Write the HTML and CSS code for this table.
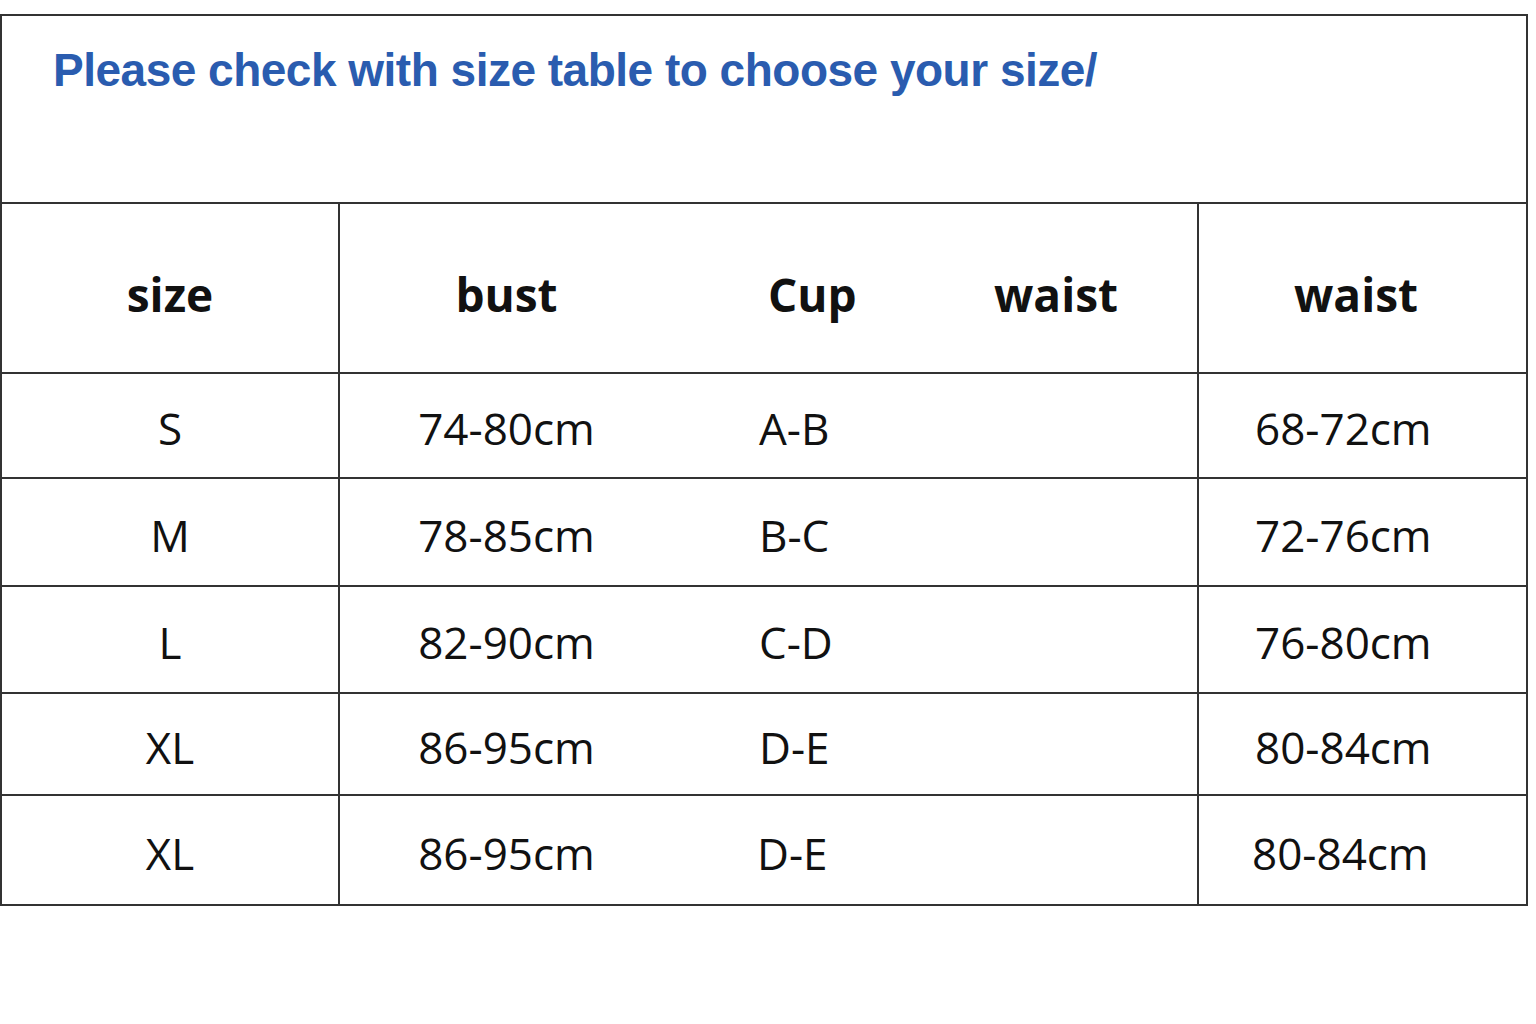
FILE: index.html
```html
<!DOCTYPE html>
<html lang="en">
<head>
<meta charset="utf-8">
<title>Size table</title>
<link rel="stylesheet" href="styles.css">
</head>
<body>
<div class="page">
  <table class="size-table">
    <colgroup>
      <col class="c-size">
      <col class="c-bust">
      <col class="c-cup">
      <col class="c-waist">
      <col class="c-waist2">
    </colgroup>
    <thead>
      <tr class="title-row">
        <th colspan="5" class="title">Please check with size table to choose your size/</th>
      </tr>
      <tr class="head-row">
        <th class="size b-right">size</th>
        <th class="bust">bust</th>
        <th class="cup">Cup</th>
        <th class="waist">waist</th>
        <th class="waist2 b-left">waist</th>
      </tr>
    </thead>
    <tbody>
      <tr class="r1"><td class="size b-right">S</td><td class="bust">74-80cm</td><td class="cup">A-B</td><td class="waist"></td><td class="waist2 b-left">68-72cm</td></tr>
      <tr class="r2"><td class="size b-right">M</td><td class="bust">78-85cm</td><td class="cup">B-C</td><td class="waist"></td><td class="waist2 b-left">72-76cm</td></tr>
      <tr class="r3"><td class="size b-right">L</td><td class="bust">82-90cm</td><td class="cup">C-D</td><td class="waist"></td><td class="waist2 b-left">76-80cm</td></tr>
      <tr class="r4"><td class="size b-right">XL</td><td class="bust">86-95cm</td><td class="cup">D-E</td><td class="waist"></td><td class="waist2 b-left">80-84cm</td></tr>
      <tr class="r5"><td class="size b-right">XL</td><td class="bust">86-95cm</td><td class="cup d-e">D-E</td><td class="waist"></td><td class="waist2 b-left last">80-84cm</td></tr>
    </tbody>
  </table>
</div>
</body>
</html>
```

FILE: styles.css
```css
html, body {
  margin: 0;
  padding: 0;
  background: #ffffff;
}

.page {
  padding-top: 14px;
}

.size-table {
  width: 1526px;
  table-layout: fixed;
  border-collapse: collapse;
  border: 2px solid #333333;
  font-family: "Open Sans", "Noto Sans", sans-serif;
  color: #111111;
}

.c-size { width: 338px; }
.c-bust { width: 334px; }
.c-cup { width: 268px; }
.c-waist { width: 257px; }
.c-waist2 { width: 329px; }

.size-table th,
.size-table td {
  padding: 0;
  border-top: 2px solid #333333;
  border-bottom: 2px solid #333333;
}

.size-table .b-right { border-right: 2px solid #333333; }
.size-table .b-left { border-left: 2px solid #333333; }

.size-table .title {
  height: 156px;
  vertical-align: top;
  text-align: left;
  padding: 30px 0 0 51px;
  font-family: "Liberation Sans", Arial, sans-serif;
  font-weight: 700;
  font-size: 46px;
  letter-spacing: -0.5px;
  line-height: 48px;
  color: #2a5caf;
}

.size-table .head-row th {
  height: 156px;
  font-size: 46px;
  font-weight: 700;
  line-height: 1;
  padding-top: 12px;
}

.size-table tbody td {
  font-size: 44px;
  font-weight: 400;
  line-height: 1;
  padding-top: 5px;
}

.size-table .r1 td { height: 98px; }
.size-table .r2 td { height: 101px; }
.size-table .r3 td { height: 100px; }
.size-table .r4 td { height: 95px; }
.size-table .r5 td { height: 103px; }

.size-table .size { text-align: center; }
.size-table .bust { text-align: center; }
.size-table .cup { text-align: left; padding-left: 86px; }
.size-table .head-row .cup { padding-left: 95px; }
.size-table .waist { text-align: center; }
.size-table .head-row .waist { padding-right: 26px; }
.size-table .waist2 { text-align: left; padding-left: 56px; }
.size-table .head-row .waist2 { padding-left: 95px; }
.size-table .cup.d-e { padding-left: 84px; }
.size-table .waist2.last { padding-left: 53px; }
```
